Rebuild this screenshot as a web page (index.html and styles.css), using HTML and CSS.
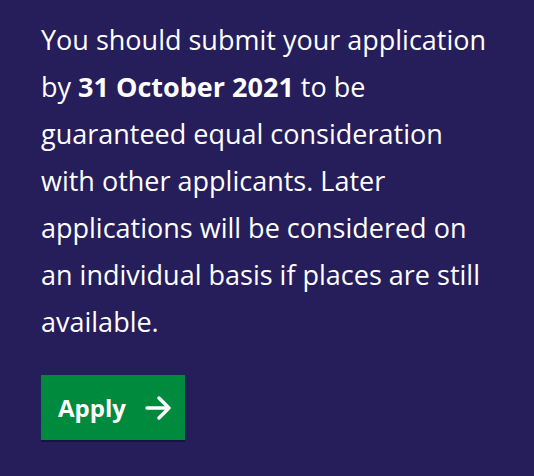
FILE: index.html
```html
<!DOCTYPE html>
<html lang="en">

<head>
    <meta charset="UTF-8">
    <meta name="viewport" content="width=device-width, initial-scale=1.0">
    <title>Apply</title>
    <link rel="stylesheet" href="styles.css">
</head>

<body>
    <div class="panel">
        <p class="deadline">You should submit your application by <strong>31 October 2021</strong> to be guaranteed equal consideration with other applicants. Later applications will be considered on an individual basis if places are still available.</p>
        <a class="apply" href="#">Apply
            <svg width="26" height="24" viewBox="0 0 26 24" aria-hidden="true">
                <path d="M2 12H24M14 2L24 12L14 22" fill="none" stroke="#fff" stroke-width="3.4" stroke-linecap="round" stroke-linejoin="round" />
            </svg>
        </a>
    </div>
</body>

</html>
```

FILE: styles.css
```css
html, body {
    margin: 0;
    padding: 0;
    background: #261d5b;
}
.panel {
    padding: 16px 30px 35px 41px;
    font-family: "Open Sans", sans-serif;
    color: #fff;
}
.deadline {
    width: 452px;
    margin: 0 0 30px;
    font-size: 27px;
    line-height: 47px;
}
.deadline strong {
    font-weight: 700;
}
.apply {
    display: inline-flex;
    align-items: center;
    gap: 19px;
    height: 65px;
    padding: 0 14px 0 17px;
    box-sizing: border-box;
    background: #008a3e;
    box-shadow: 0 2px 0 #1a1240;
    color: #fff;
    font-size: 24px;
    font-weight: 700;
    text-decoration: none;
}
```
